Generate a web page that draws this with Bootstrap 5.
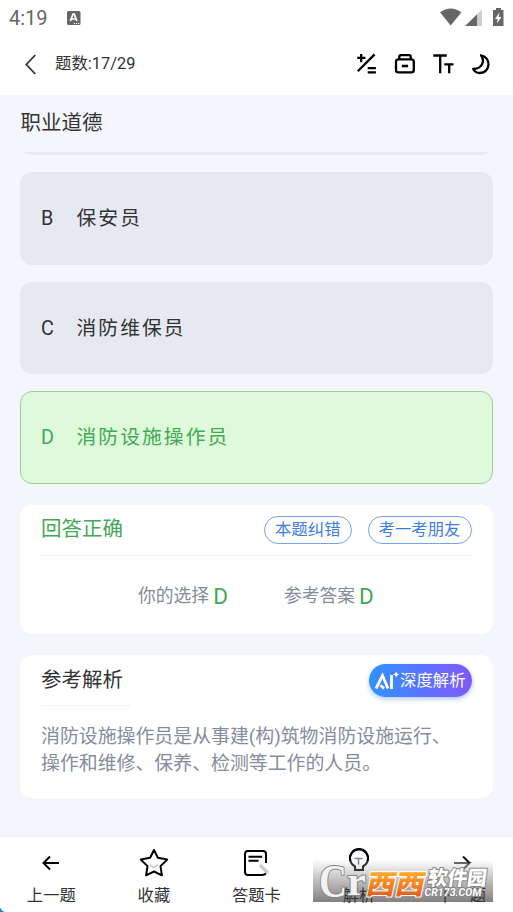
<!DOCTYPE html>
<html lang="zh-CN">
<head>
<meta charset="utf-8">
<meta name="viewport" content="width=device-width, initial-scale=1">
<title>职业道德</title>
<link href="https://cdn.jsdelivr.net/npm/bootstrap@5.3.0/dist/css/bootstrap.min.css" rel="stylesheet">
<style>
body{font-family:Roboto,"Noto Sans CJK SC",sans-serif;font-weight:400;background:#f5f6fb;color:#333;width:513px;height:912px;overflow:hidden;line-height:1.2}
svg{display:block;flex:none}
.status-bar{height:36px;padding:0 8px 0 9px;color:#666;font-size:20px}
.caps-icon{margin-left:19px}
.app-head{height:58.5px;padding:0 22px 2px 24px}
.count{font-size:16.4px;margin-left:17px}
.quiz{padding:0 20.5px 0 20px}
.topic{font-size:20.5px;height:57px;line-height:57px;padding-left:.6px}
.clip{height:3.5px;overflow:hidden}
.clip-in{height:40px;margin-top:-36.5px;border-radius:12px;background:#e6e9f2}
.option{height:92.5px;border-radius:12px;background:#e6e9f2;font-size:19.8px;letter-spacing:2.05px;padding:2px 21px 0;margin-bottom:17px}
.option .key{width:35.5px;letter-spacing:0}
.option.right{background:#dffada;color:#43a957;border:1px solid #9fcaa0;padding:1px 20px 0;height:93px}
.panel{background:#fff;border-radius:12px;padding:0 21px}
.good{color:#43a957}
.panel-title{font-size:20.5px}
.panel-head{height:51px}
.hair{border-bottom:1px solid #f3f4f6}
.tagbtn{border:1px solid #77a3ea;border-radius:14px;color:#3f7ce0;font-size:16.4px;height:28px;padding:0 10px;white-space:nowrap}
.muted{color:#858c9b}
.answers{font-size:17.8px;height:81px}
.answers b{font-weight:400;font-size:22.5px;margin-left:4px}
.ai{width:102.5px;height:33px;border-radius:17px;background:linear-gradient(90deg,#2f92ff,#8258fa);color:#fff;font-size:16.4px;box-shadow:0 2px 5px #4d83ff77;padding-left:5px}
.explain{font-size:18.9px;line-height:27.3px;white-space:nowrap}
.dock{height:75px;background:#fff;box-shadow:0 -1px 3px #0000000a}
.dock .item{width:102.6px;font-size:16.3px;padding-top:11px;color:#333}
.dock .item span{margin-top:7.5px}
.mark-logo{left:313px;top:860px}
.mark-shade{left:313px;bottom:10px;width:180px;height:42px;background:linear-gradient(#7770,#77777770 45%,#707070e0)}
.corner{left:0;bottom:0}
</style>
<script src="https://cdn.jsdelivr.net/npm/bootstrap@5.3.0/dist/js/bootstrap.bundle.min.js"></script>
</head>
<body class="position-relative d-flex flex-column">
<header class="bg-white">
 <div class="status-bar d-flex align-items-center">
  <span>4:19</span>
  <svg class="caps-icon" width="14" height="14" viewBox="0 0 14 14"><rect width="13.5" height="14" rx="1.5" fill="#666"/><path d="M3.4 10 6 3h1.2l2.6 7M4.5 8h4" fill="none" stroke="#fff" stroke-width="1.7"/><path d="M7 12.5h6" stroke="#fff" stroke-dasharray="1.2 .8"/></svg>
  <svg class="ms-auto" width="66" height="20" viewBox="0 0 66 20"><path d="M1 4.3Q11.7-3.3 22.4 4.3L11.7 17.5z" fill="#666"/><path d="M42.9 1.5V18H26.2z" fill="#ccc"/><path d="M38 6.3V18H26.2z" fill="#666"/><path d="M54 2h3V0h5v2h2.5v16H54z" fill="#666"/><path d="M60.5 4.5 56 11h2.7l-.8 4.5L62.5 9h-2.8z" fill="#fff"/></svg>
 </div>
 <div class="app-head d-flex align-items-center">
  <svg width="14" height="22" viewBox="0 0 14 22"><path d="M11.3 2 2.3 11.5l9 9.5" fill="none" stroke="#333" stroke-width="1.8"/></svg>
  <span class="count">题数:17/29</span>
  <svg class="ms-auto" width="135" height="22" viewBox="0 0 135 22" fill="none" stroke="#000" stroke-width="2.3"><path d="M1.2 4.9h8.2M5.2 1v8.2M18.6 1.4 1.8 18.2M11.7 15.2h8.2M11.7 19.3h8.2"/><rect x="40" y="6.3" width="17.8" height="13" rx="2.4"/><path d="M43.3 6V3.8q0-1.6 1.6-1.6h8.2q1.6 0 1.6 1.6V6M45.8 13h6.3"/><path d="M77.3 2.5h13.5M84.2 2.5v17.8M88.3 11.4h9.2M93.2 11.4v8.9M125 2.3c10 1.2 10.4 17.7-1.5 17.7-3 0-5.2-1.6-6.3-4.1 8.2 0 12.4-7.3 7.8-13.6Z" stroke-linejoin="round"/></svg>
 </div>
</header>
<main class="quiz">
 <div class="topic">职业道德</div>
 <div class="clip"><div class="clip-in"></div></div>
 <div class="option d-flex align-items-center" style="margin-top:17px"><span class="key">B</span>保安员</div>
 <div class="option d-flex align-items-center"><span class="key">C</span>消防维保员</div>
 <div class="option right d-flex align-items-center"><span class="key">D</span>消防设施操作员</div>
 <section class="panel" style="height:129.5px;margin-top:20.5px">
  <div class="panel-head hair d-flex align-items-center"><span class="panel-title good">回答正确</span><span class="tagbtn ms-auto d-flex align-items-center">本题纠错</span><span class="tagbtn d-flex align-items-center ms-3">考一考朋友</span></div>
  <div class="answers muted d-flex align-items-center"><span class="d-flex align-items-center" style="margin-left:97px">你的选择<b class="good">D</b></span><span class="d-flex align-items-center" style="margin-left:56px">参考答案<b class="good">D</b></span></div>
 </section>
 <section class="panel" style="height:142.5px;margin-top:21px">
  <div class="d-flex justify-content-between">
   <div class="panel-head hair d-flex align-items-center panel-title" style="width:90px">参考解析</div>
   <div class="ai d-flex align-items-center" style="margin-top:9px"><svg width="26" height="20" viewBox="0 0 26 20"><path d="M2 17.5 8.5 4.5 14 17.5M6.5 14.3 10 17.5M17.5 4v14" fill="none" stroke="#fff" stroke-width="2.8"/><path d="m22.2.5 1 2 2 1-2 1-1 2-1-2-2-1 2-1z" fill="#fff"/></svg><span>深度解析</span></div>
  </div>
  <div class="explain muted" style="margin-top:17px">消防设施操作员是从事建(构)筑物消防设施运行、<br>操作和维修、保养、检测等工作的人员。</div>
 </section>
</main>
<footer class="dock d-flex mt-auto position-relative">
 <div class="mark-shade position-absolute"></div>
 <div class="item position-relative d-flex flex-column align-items-center"><svg width="30" height="30" viewBox="0 0 30 30"><path d="M23 15H7.5M14 8.5 7.5 15l6.5 6.5" fill="none" stroke="#000" stroke-width="2"/></svg><span>上一题</span></div>
 <div class="item position-relative d-flex flex-column align-items-center"><svg width="30" height="30" viewBox="0 0 30 30" fill="none" stroke-width="2" stroke-linejoin="round"><path d="m15 2 3.9 7.8 9.3 1.8-6.7 6.5 1.4 9.2-7.9-3.8-7.9 3.8 1.4-9.2-6.7-6.5 9.3-1.8z" stroke="#000"/><path d="M11 16.5q4 5.5 8 0" stroke="#c5ccdb"/></svg><span>收藏</span></div>
 <div class="item position-relative d-flex flex-column align-items-center"><svg width="30" height="30" viewBox="0 0 30 30" fill="none" stroke-width="2"><path d="M25 15V6q0-3-3-3H7Q4 3 4 6v18q0 3 3 3h14q3 0 4-2M7.5 8.7h13.7M7.5 12.8h10" stroke="#000"/><path d="m19 17 8 8" stroke="#c5ccdb" stroke-width="3.2"/></svg><span>答题卡</span></div>
 <div class="item position-relative d-flex flex-column align-items-center"><svg width="30" height="30" viewBox="0 0 30 30" fill="none" stroke-width="2"><path d="M11 22v-3.5a9 9 0 1 1 8 0V22z" stroke="#333"/><path d="M6.5 13a9 9 0 1 1 17 0" stroke="#000"/><path d="M10.5 10.5h8M14.5 10.5v6" stroke="#778297" stroke-width="1.5"/></svg><span>解析</span></div>
 <div class="item position-relative d-flex flex-column align-items-center"><svg width="30" height="30" viewBox="0 0 30 30" fill="none" stroke-width="2"><path d="M7 15h15.5l-6.5 6.5" stroke="#666"/><path d="m16 8.5 6.5 6.5" stroke="#111"/></svg><span>下一题</span></div>
</footer>
<svg class="position-absolute mark-logo" width="180" height="42" viewBox="0 0 180 42">
 <defs><linearGradient id="fire" x2="0" y2="1"><stop offset=".2" stop-color="#ffb52c"/><stop offset="1" stop-color="#e64a16"/></linearGradient></defs>
 <g paint-order="stroke" stroke-linejoin="round">
 <text x="6" y="37" font-family="Liberation Serif,serif" font-weight="700" font-size="46" textLength="28" lengthAdjust="spacingAndGlyphs" fill="#f2f2f2" stroke="#858585" stroke-width="2">C</text>
 <text x="34" y="35" font-family="Liberation Serif,serif" font-weight="700" font-size="42" textLength="19" lengthAdjust="spacingAndGlyphs" fill="#f2f2f2" stroke="#858585" stroke-width="2">r</text>
 <g font-family="Noto Sans CJK SC,sans-serif" font-weight="900">
 <text transform="translate(52 33.5) skewX(-12)" font-size="27" textLength="58" lengthAdjust="spacingAndGlyphs" fill="url(#fire)" stroke="#fff" stroke-width="2">西西</text>
 <text transform="translate(114 25) skewX(-8)" font-size="20" textLength="59" lengthAdjust="spacingAndGlyphs" fill="#fff" stroke="#858585" stroke-width="2">软件园</text></g>
 <text transform="translate(111 36) skewX(-8)" font-family="Roboto,sans-serif" font-weight="700" font-size="11" textLength="57" lengthAdjust="spacingAndGlyphs" fill="#fff" stroke="#858585" stroke-width="2">CR173.COM</text>
 </g>
</svg>
<svg class="position-absolute corner" width="5" height="5"><path d="M0 0Q1 4 5 5H0z" fill="#168dbb"/></svg>
</body>
</html>
